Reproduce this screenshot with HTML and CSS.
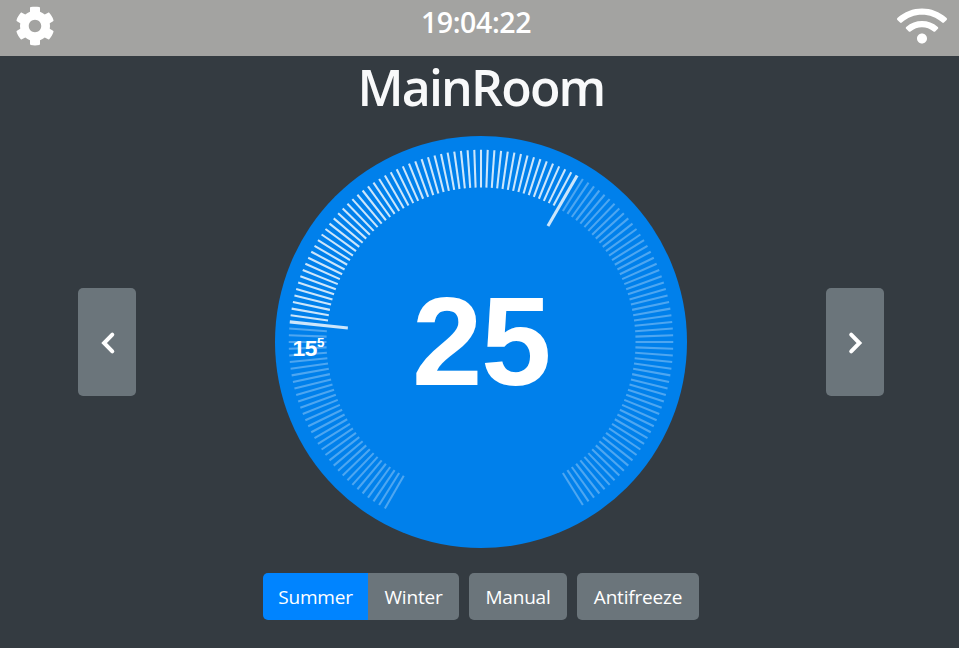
FILE: index.html
```html
<!DOCTYPE html>
<html lang="en">
<head>
<meta charset="utf-8">
<title>Thermostat</title>
<link rel="stylesheet" href="styles.css">
</head>
<body>
<header class="topbar">
  <svg class="icon-cog" viewBox="0 0 512 512" aria-hidden="true"><path d="M487.4 315.7l-42.6-24.6c4.3-23.2 4.3-47 0-70.2l42.6-24.6c4.9-2.8 7.1-8.6 5.5-14-11.1-35.6-30-67.8-54.7-94.6-3.8-4.1-10-5.1-14.8-2.3L380.8 110c-17.9-15.4-38.5-27.3-60.8-35.1V25.8c0-5.6-3.9-10.5-9.4-11.7-36.7-8.2-74.3-7.8-109.2 0-5.5 1.2-9.4 6.1-9.4 11.7V75c-22.2 7.9-42.8 19.8-60.8 35.1L88.7 85.5c-4.9-2.8-11-1.9-14.8 2.3-24.7 26.7-43.6 58.9-54.7 94.6-1.7 5.4.6 11.2 5.5 14L67.3 221c-4.3 23.2-4.3 47 0 70.2l-42.6 24.6c-4.9 2.8-7.1 8.6-5.5 14 11.1 35.6 30 67.8 54.7 94.6 3.8 4.1 10 5.1 14.8 2.3l42.6-24.6c17.9 15.4 38.5 27.3 60.8 35.1v49.2c0 5.6 3.9 10.5 9.4 11.7 36.7 8.2 74.3 7.8 109.2 0 5.5-1.2 9.4-6.1 9.4-11.7v-49.2c22.2-7.9 42.8-19.8 60.8-35.1l42.6 24.6c4.9 2.8 11 1.9 14.8-2.3 24.7-26.7 43.6-58.9 54.7-94.6 1.5-5.5-.7-11.3-5.6-14.1zM256 336c-44.1 0-80-35.9-80-80s35.9-80 80-80 80 35.9 80 80-35.9 80-80 80z"/></svg>
  <div class="clock">19:04:22</div>
  <svg class="icon-wifi" viewBox="0 0 640 512" aria-hidden="true"><path d="M634.91 154.88C457.74-8.99 182.19-8.93 5.09 154.88c-6.66 6.16-6.79 16.59-.35 22.98l34.24 33.97c6.14 6.1 16.02 6.23 22.4.38 145.92-133.68 371.3-133.71 517.25 0 6.38 5.85 16.26 5.71 22.4-.38l34.24-33.97c6.43-6.39 6.3-16.82-.36-22.98zM320 352c-35.35 0-64 28.65-64 64s28.65 64 64 64 64-28.65 64-64-28.65-64-64-64zm202.67-83.59c-115.26-101.93-290.21-101.82-405.34 0-6.9 6.1-7.12 16.69-.57 23.15l34.44 33.99c6 5.92 15.66 6.32 22.05.8 83.95-72.57 209.74-72.41 293.49 0 6.39 5.52 16.05 5.13 22.05-.8l34.44-33.99c6.56-6.46 6.33-17.06-.56-23.15z"/></svg>
</header>
<main class="panel">
  <h1 class="room">MainRoom</h1>
  <div class="stage">
    <button class="btn nav" aria-label="Previous room"><svg viewBox="0 0 20 26"><path d="M14.3 4.7 6.1 13l8.2 8.3"/></svg></button>
    <svg class="dial" viewBox="0 0 400 400">
      <circle class="dial-face" cx="200" cy="200" r="200"/>
      <g id="ticks"></g>
      <text class="dial-target" x="200" y="242">25</text>
      <text class="dial-ambient" x="32.4" y="213.3">15<tspan class="dial-half" dy="-8">5</tspan></text>
    </svg>
    <button class="btn nav" aria-label="Next room"><svg viewBox="0 0 20 26"><path d="M5.2 4.7 13.4 13l-8.2 8.3"/></svg></button>
  </div>
  <div class="modes">
    <div class="group">
      <button class="btn mode summer active">Summer</button>
      <button class="btn mode winter">Winter</button>
    </div>
    <button class="btn mode manual">Manual</button>
    <button class="btn mode antifreeze">Antifreeze</button>
  </div>
</main>
<script src="dial.js"></script>
</body>
</html>
```
FILE: styles.css
```css
* { box-sizing: border-box; }
body {
  margin: 0;
  height: 648px;
  overflow: hidden;
  background: #343b41;
  color: #f8f9fa;
  font-family: "Open Sans", "Noto Sans", sans-serif;
}
.topbar {
  display: flex;
  justify-content: space-between;
  height: 56px;
  padding: 6px 12px 0 15px;
  background: #a3a3a1;
}
.topbar svg { height: 40px; fill: #fff; }
.icon-cog { width: 40px; }
.icon-wifi { width: 50px; }
.clock {
  width: 130px;
  color: #fff;
  font-size: 28.5px;
  font-weight: 600;
  line-height: 33px;
  letter-spacing: -0.4px;
  text-align: center;
  white-space: nowrap;
}
.panel {
  display: flex;
  flex-direction: column;
  align-items: center;
  width: 962px;
}
.room {
  height: 80px;
  margin: 0;
  font-size: 50px;
  font-weight: 620;
  line-height: 63px;
  letter-spacing: -1.8px;
}
.stage {
  display: flex;
  align-items: center;
  justify-content: space-between;
  width: 806px;
  height: 412px;
}
.dial { width: 412px; height: 412px; }
.dial-face { fill: #0080eb; }
.tick { fill: rgba(255, 255, 255, 0.3); }
.tick.on { fill: rgba(255, 255, 255, 0.8); }
.dial text {
  fill: #fff;
  font-family: "Liberation Sans", Arial, sans-serif;
  font-weight: 700;
  text-anchor: middle;
}
.dial .dial-target { font-size: 123px; letter-spacing: -1.5px; }
.dial .dial-ambient { font-size: 22px; letter-spacing: -0.3px; }
.dial-half { font-size: 13px; }
.btn {
  margin: 0;
  padding: 0;
  border: 0;
  border-radius: 5px;
  background: #6b757b;
  color: #fff;
  font-family: inherit;
}
.nav {
  display: flex;
  align-items: center;
  justify-content: center;
  width: 58px;
  height: 108px;
  padding: 2px 0 0 1px;
}
.nav svg { width: 20px; height: 26px; }
.nav path {
  fill: none;
  stroke: #fff;
  stroke-width: 4;
  stroke-linecap: round;
}
.modes {
  display: flex;
  gap: 10px;
  margin-top: 25px;
}
.group { display: flex; }
.mode {
  height: 47px;
  padding-top: 2px;
  font-size: 19px;
  letter-spacing: -0.2px;
  line-height: 45px;
  white-space: nowrap;
}
.mode.active { background: #0084ff; }
.summer { width: 105px; border-radius: 5px 0 0 5px; }
.winter { width: 91px; border-radius: 0 5px 5px 0; }
.manual { width: 98px; }
.antifreeze { width: 122px; }
```
FILE: dial.js
```js
const TICKS = 150, SWEEP = 300, MIN = 10, MAX = 35;
const ambient = 15.5, target = 25;
const indexOf = v => Math.round((v - MIN) / (MAX - MIN) * TICKS);
const group = document.getElementById('ticks');

function addTick(index, width, inner, on) {
  const r = document.createElementNS('http://www.w3.org/2000/svg', 'rect');
  r.setAttribute('x', 200 - width / 2);
  r.setAttribute('y', 400 / 30);
  r.setAttribute('width', width);
  r.setAttribute('height', inner - 400 / 30);
  r.setAttribute('transform', `rotate(${index * SWEEP / TICKS - SWEEP / 2} 200 200)`);
  r.setAttribute('class', on ? 'tick on' : 'tick');
  group.appendChild(r);
}

const from = indexOf(ambient), to = indexOf(target);
for (let i = 0; i < TICKS; i++) {
  const large = i === from || i === to;
  addTick(i, large ? 3 : 2, large ? 70 : 50, i >= from && i <= to);
}
```
